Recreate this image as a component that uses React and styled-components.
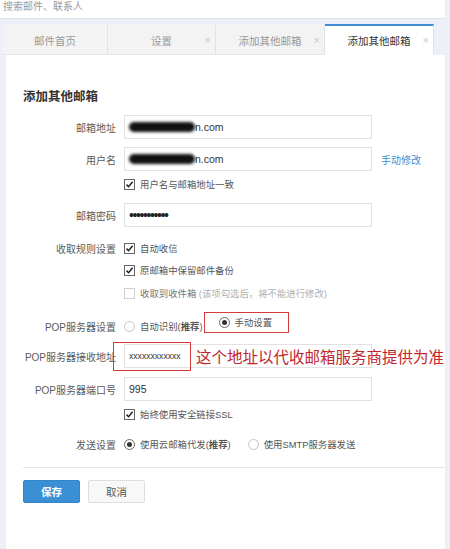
import styled, { createGlobalStyle } from "styled-components"

const GlobalStyle = createGlobalStyle`
  body {
    margin: 0;
    background: #edf1f7;
    font-family: "Liberation Sans", "Noto Sans CJK SC", sans-serif;
    color: #444;
    text-autospace: no-autospace;
  }
`;

const Page = styled.div`
  width: 445px;
`;

const SearchBar = styled.div`
  height: 18px;
  background: #fff;
  border-bottom: 1px solid #dfe3e8;
  padding-left: 3px;
  font-size: 10px;
  line-height: 14px;
  color: #9a9a9a;
`;

const TabBar = styled.div`
  display: flex;
  margin-top: 5px;
  padding-left: 3px;
  height: 31px;
`;

const Tab = styled.div`
  display: grid;
  grid-template-columns: 1fr auto 1fr;
  align-items: center;
  width: ${p => p.$w}px;
  box-sizing: border-box;
  background: ${p => (p.$active ? "#fff" : "#f3f3f3")};
  border-right: 1px solid #e2e2e2;
  border-top: 2px solid ${p => (p.$active ? "#3f8dd0" : "#f3f3f3")};
  border-bottom: 1px solid ${p => (p.$active ? "#fff" : "#e6e6e6")};
  font-size: 10.5px;
  color: ${p => (p.$active ? "#333" : "#999")};
`;

const TabText = styled.span`
  grid-column: 2;
`;

const TabClose = styled.span`
  grid-column: 3;
  justify-self: end;
  padding-right: 4px;
  font-size: 11px;
  color: #c8c8c8;
`;

const Panel = styled.div`
  margin-left: 6px;
  background: #fff;
  min-height: 494px;
  padding: 32px 0 0 17px;
  box-sizing: border-box;
`;

const Heading = styled.h2`
  margin: 0;
  font-size: 12.5px;
  line-height: 20px;
  font-weight: 600;
  color: #333;
`;

const Row = styled.div`
  display: flex;
  align-items: center;
  height: ${p => p.$h || 16}px;
  margin-top: ${p => p.$mt}px;
  font-size: 10px;
`;

const Label = styled.div`
  width: 93px;
  margin-right: 8px;
  text-align: right;
  color: #5a5a5a;
  flex-shrink: 0;
`;

const Field = styled.div`
  position: relative;
  display: flex;
  align-items: center;
  width: 248px;
  height: 24px;
  box-sizing: border-box;
  border: 1px solid #e2e2e2;
  padding-left: 4px;
  font-size: 10.5px;
  color: #333;
`;

const Blur = styled.span`
  display: inline-block;
  width: 66px;
  height: 10px;
  border-radius: 5px;
  background: #111;
  filter: blur(1.5px);
`;

const Dots = styled.span`
  font-size: 14px;
  letter-spacing: -1.4px;
  color: #222;
`;

const Small = styled.span`
  font-size: 8.6px;
  color: #333;
`;

const Link = styled.span`
  margin-left: 9px;
  color: #3f8dcc;
`;

const Option = styled.label`
  display: flex;
  align-items: center;
  gap: 5px;
  margin-right: ${p => p.$mr || 0}px;
  font-size: 9.4px;
  color: ${p => (p.$muted ? "#777" : "#555")};
`;

const Note = styled.span`
  color: #b0b0b0;
`;

const Strong = styled.b`
  font-weight: bold;
  color: #555;
`;

const Box = styled.span`
  display: inline-flex;
  align-items: center;
  justify-content: center;
  width: 11px;
  height: 11px;
  box-sizing: border-box;
  border: 1px solid ${p => (p.$checked ? "#666" : "#cfcfcf")};
  background: #fff;
`;

const Circle = styled.span`
  display: inline-flex;
  align-items: center;
  justify-content: center;
  width: 11px;
  height: 11px;
  box-sizing: border-box;
  border-radius: 50%;
  border: 1px solid ${p => (p.$checked ? "#666" : "#c4c4c4")};
  &::after {
    content: "";
    display: ${p => (p.$checked ? "block" : "none")};
    width: 5px;
    height: 5px;
    border-radius: 50%;
    background: #333;
  }
`;

const RedFrame = styled.span`
  display: flex;
  align-items: center;
  height: 21px;
  box-sizing: border-box;
  border: 1.5px solid #d63a3a;
  padding: 0 16px 0 14px;
  margin-left: 1px;
  margin-bottom: 8px;
`;

const RedBox = styled.span`
  position: absolute;
  left: -12px;
  top: -3px;
  width: 78px;
  height: 29px;
  box-sizing: border-box;
  border: 1.5px solid #d63a3a;
`;

const Annotation = styled.span`
  position: absolute;
  left: 71px;
  top: 1px;
  white-space: nowrap;
  font-family: "Noto Sans CJK SC", sans-serif;
  font-size: 15.5px;
  line-height: 20px;
  color: #c1272d;
`;

const Divider = styled.div`
  margin-top: 15px;
  border-top: 1px solid #e6e6e6;
`;

const Buttons = styled.div`
  display: flex;
  gap: 8px;
  margin-top: 12px;
`;

const Button = styled.button`
  width: 57px;
  height: 23px;
  border-radius: 2px;
  font-family: inherit;
  font-size: 10.5px;
  font-weight: ${p => (p.$primary ? "bold" : "normal")};
  color: ${p => (p.$primary ? "#fff" : "#555")};
  background: ${p => (p.$primary ? "#3b8fd5" : "#f8f8f8")};
  border: 1px solid ${p => (p.$primary ? "#3484c9" : "#dedede")};
  padding: 0;
`;

const Check = ({ checked = true }) => (
  <Box $checked={checked}>
    {checked && (
      <svg width="9" height="9" viewBox="0 0 9 9">
        <path d="M1.5 4.6 L3.6 6.7 L7.6 1.8" fill="none" stroke="#222" strokeWidth="1.5" />
      </svg>
    )}
  </Box>
);

const tabs = [
  { name: "邮件首页", w: 105 },
  { name: "设置", w: 108, close: true },
  { name: "添加其他邮箱", w: 109, close: true },
  { name: "添加其他邮箱", w: 109, close: true, active: true },
];

const App = () => {
  return (
    <Page>
      <GlobalStyle />
      <SearchBar>搜索邮件、联系人</SearchBar>
      <TabBar>
        {tabs.map((t, i) => (
          <Tab key={i} $w={t.w} $active={t.active}>
            <TabText>{t.name}</TabText>
            {t.close && <TabClose>×</TabClose>}
          </Tab>
        ))}
      </TabBar>
      <Panel>
        <Heading>添加其他邮箱</Heading>
        <Row $h={24} $mt={8}>
          <Label>邮箱地址</Label>
          <Field><Blur />n.com</Field>
        </Row>
        <Row $h={24} $mt={8}>
          <Label>用户名</Label>
          <Field><Blur />n.com</Field>
          <Link>手动修改</Link>
        </Row>
        <Row $mt={5}>
          <Label />
          <Option><Check /><span>用户名与邮箱地址一致</span></Option>
        </Row>
        <Row $h={24} $mt={11}>
          <Label>邮箱密码</Label>
          <Field><Dots>•••••••••••</Dots></Field>
        </Row>
        <Row $mt={13}>
          <Label>收取规则设置</Label>
          <Option><Check /><span>自动收信</span></Option>
        </Row>
        <Row $mt={6}>
          <Label />
          <Option><Check /><span>原邮箱中保留邮件备份</span></Option>
        </Row>
        <Row $mt={7}>
          <Label />
          <Option $muted><Check checked={false} /><span>收取到收件箱 <Note>(该项勾选后，将不能进行修改)</Note></span></Option>
        </Row>
        <Row $mt={17}>
          <Label>POP服务器设置</Label>
          <Option><Circle /><span>自动识别(<Strong>推荐</Strong>)</span></Option>
          <RedFrame>
            <Option><Circle $checked /><span>手动设置</span></Option>
          </RedFrame>
        </Row>
        <Row $h={24} $mt={10}>
          <Label>POP服务器接收地址</Label>
          <Field>
            <Small>xxxxxxxxxxxx</Small>
            <RedBox />
            <Annotation>这个地址以代收邮箱服务商提供为准</Annotation>
          </Field>
        </Row>
        <Row $h={24} $mt={9}>
          <Label>POP服务器端口号</Label>
          <Field>995</Field>
        </Row>
        <Row $mt={5}>
          <Label />
          <Option><Check /><span>始终使用安全链接SSL</span></Option>
        </Row>
        <Row $mt={14}>
          <Label>发送设置</Label>
          <Option $mr={17}><Circle $checked /><span>使用云邮箱代发(<Strong>推荐</Strong>)</span></Option>
          <Option><Circle /><span>使用SMTP服务器发送</span></Option>
        </Row>
        <Divider />
        <Buttons>
          <Button $primary>保存</Button>
          <Button>取消</Button>
        </Buttons>
      </Panel>
    </Page>
  )
}

export default App
